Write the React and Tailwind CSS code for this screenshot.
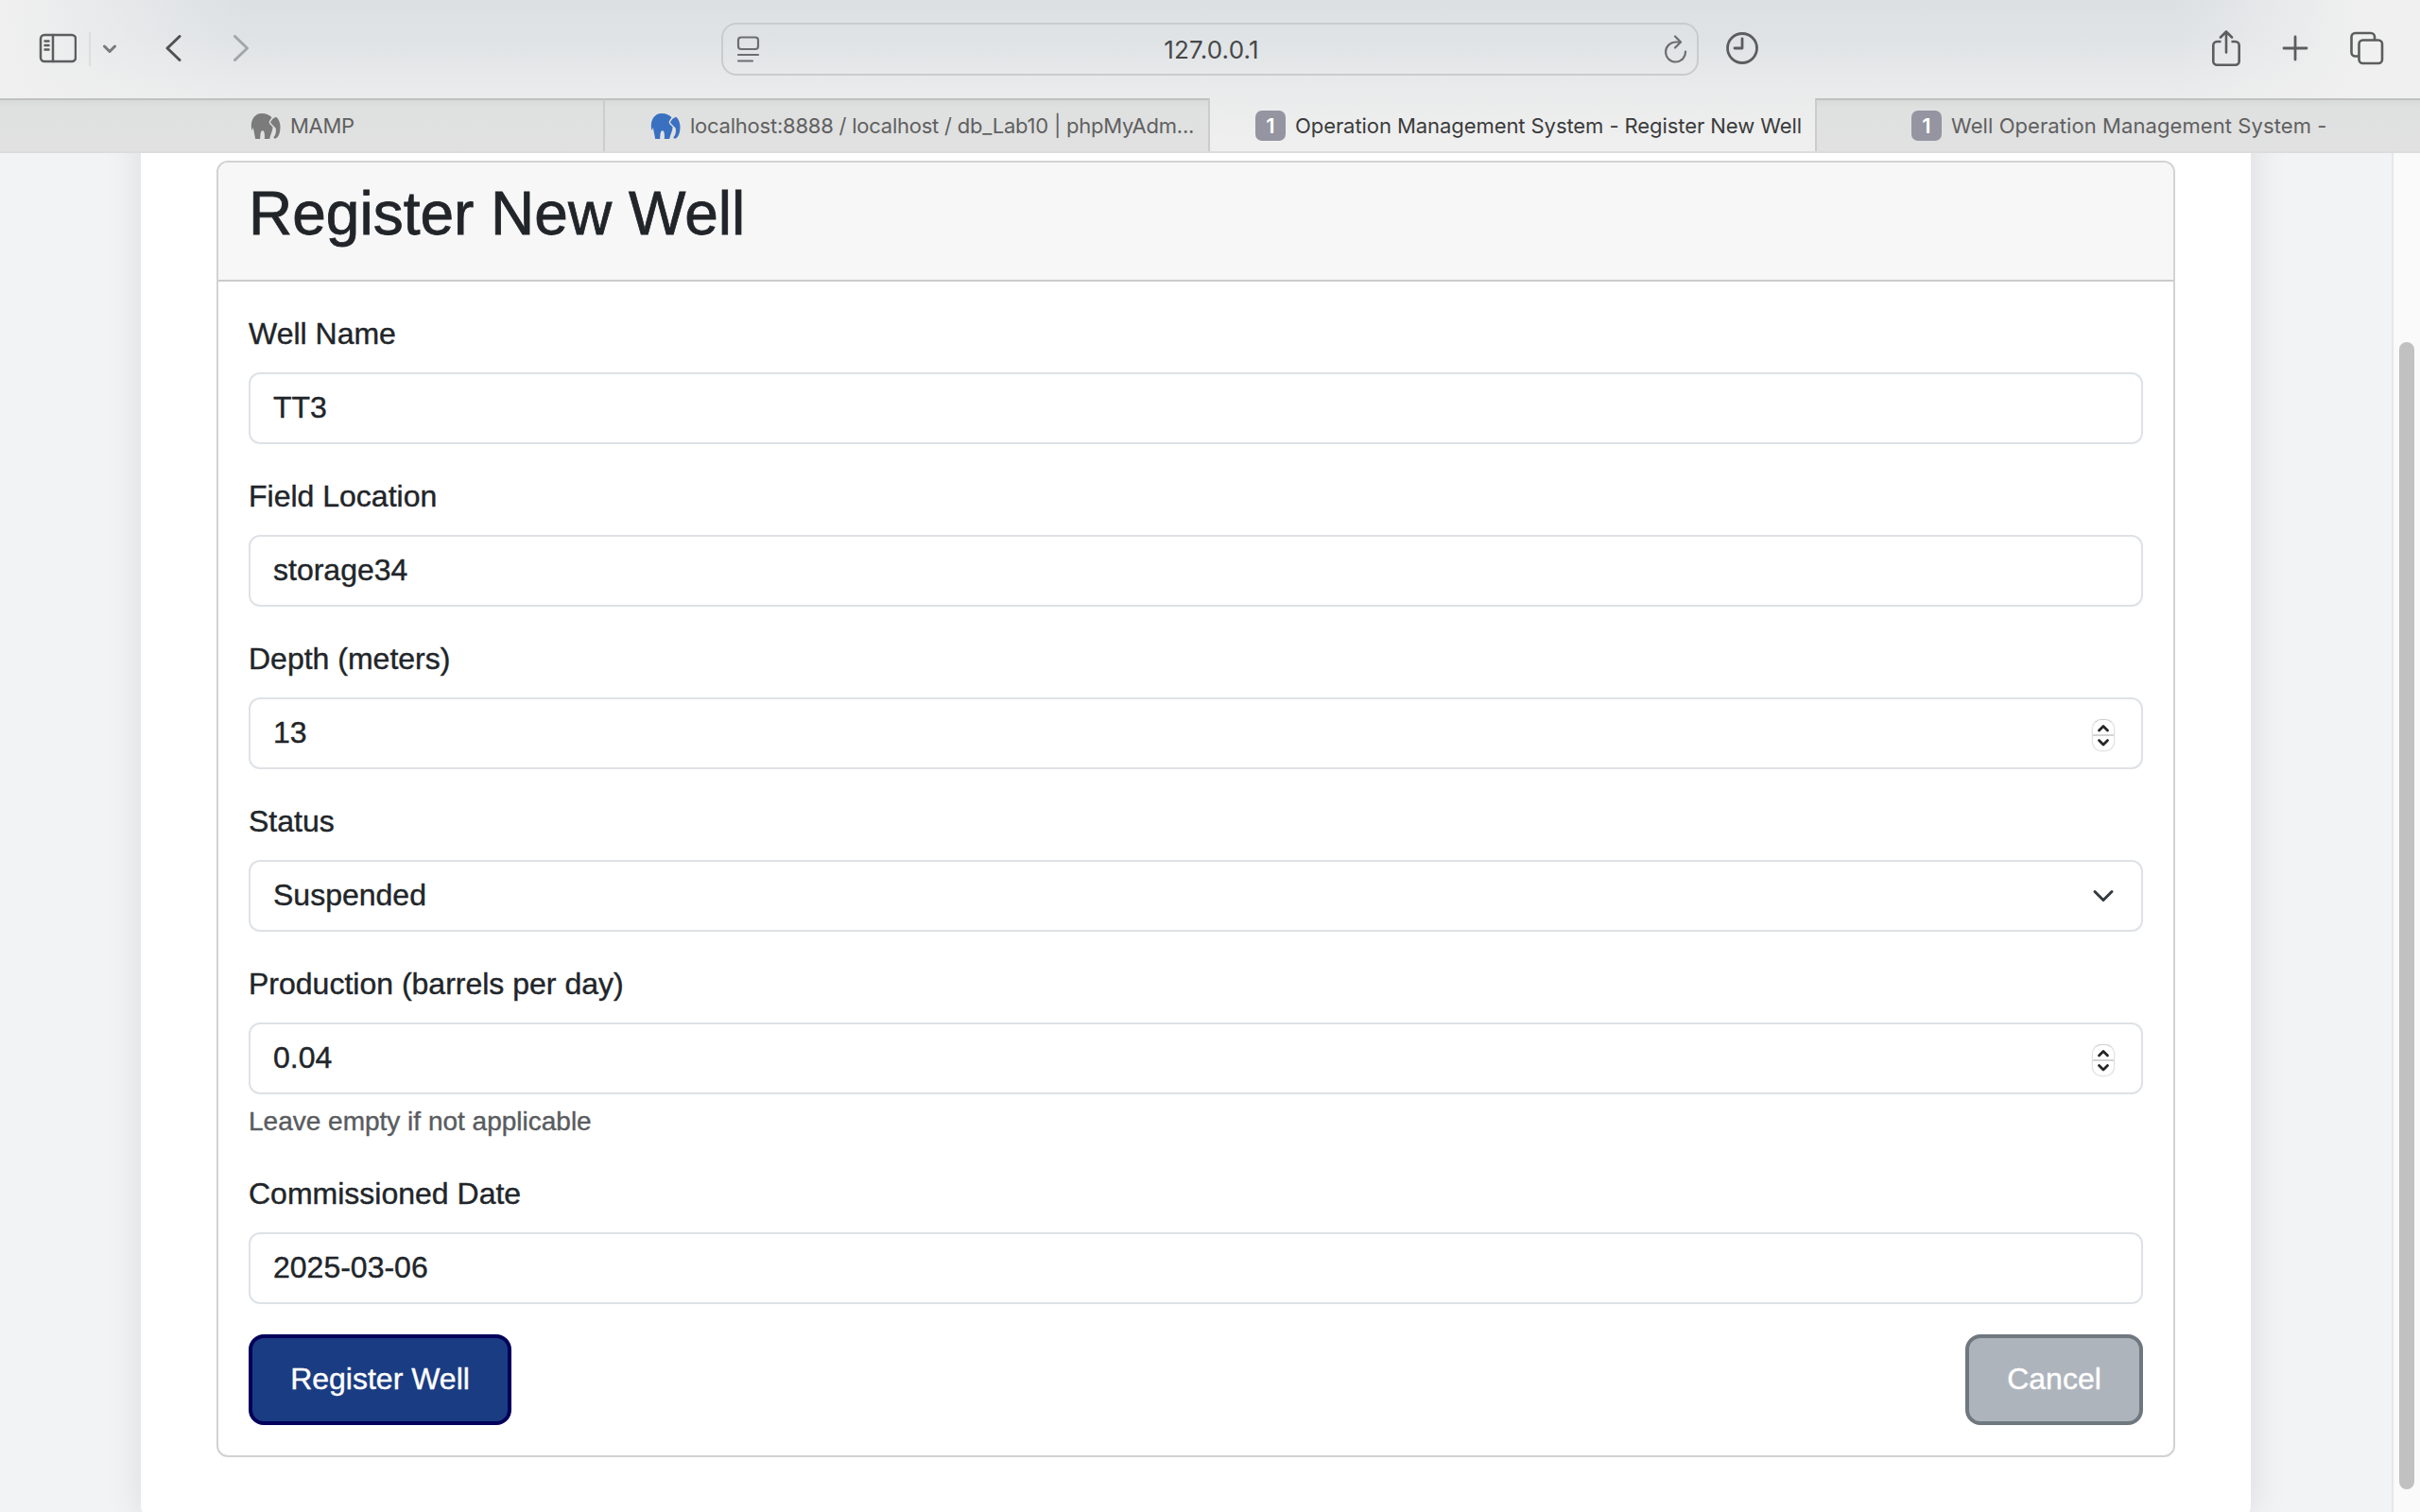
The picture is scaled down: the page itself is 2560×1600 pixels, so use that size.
const Elephant = ({ className }) => (
  <svg className={className} width="32" height="27" viewBox="0 0 95 81" fill="currentColor">
    <path d="M35 0C50 0 60 5 67 13L62 20C57 26 58 31 62 35L70 43C71 54 62 68 60 81H44C45 68 44 55 38 55C31 55 31 68 30 81H15L8 45L4 55C-3 30 8 0 35 0Z" />
    <path d="M70 17L80 11C85 13 94 25 94 42C94 62 88 77 78 80C74 80 73 78 73 75C80 70 81 58 80 48C77 42 74 42 71 38L64 31C62 28 63 26 65 24Z" />
  </svg>
);

const Badge = () => (
  <span className="flex h-8 w-8 shrink-0 items-center justify-center rounded-[7px] bg-[#9594a1] text-[22px] font-semibold text-white">1</span>
);

const Label = ({ children }) => <div className="mb-[17px] h-12 text-[32px] leading-[48px]">{children}</div>;

const Field = ({ label, value, icon, help }) => (
  <div className="mb-[31px]">
    <Label>{label}</Label>
    <div className="flex h-[76px] items-center justify-between rounded-xl border-2 border-[#dee2e6] bg-white pr-[26px] pl-6 text-[32px] leading-[48px]">
      <span className="mb-0.5">{value}</span>
      {icon}
    </div>
    {help && <div className="mt-2 text-[28px] leading-[42px] text-[#595c5f]">{help}</div>}
  </div>
);

const Spinner = () => (
  <span className="mt-1 mr-0.5 flex h-[34px] w-6 flex-col items-center rounded-[10px] border border-[#e2e2e2] border-t-[#cfcfcf] bg-white shadow-[0_0_2px_rgba(0,0,0,0.12)]">
    <svg width="22" height="32" viewBox="0 0 22 32" fill="none">
      <path d="M0 16h22" stroke="#d4d4d4" strokeWidth="2" />
      <path d="M6.500 11 11 6.500 15.500 11M6.500 21.500 11 26l4.500-4.500" stroke="#262626" strokeWidth="2.800" strokeLinecap="round" strokeLinejoin="round" />
    </svg>
  </span>
);

const Chevron = () => (
  <svg className="mr-0.5" width="24" height="24" viewBox="0 0 16 16" fill="none" stroke="#343a40" strokeWidth="2" strokeLinecap="round" strokeLinejoin="round">
    <path d="m2 5 6 6 6-6" />
  </svg>
);

const Tab = ({ className, children }) => (
  <div className={"flex h-14 items-center overflow-hidden whitespace-nowrap text-[22px] " + className}>{children}</div>
);

const inactive = "border-t-2 border-t-[#bfc0c0] bg-linear-to-b from-[#d9dbdb] via-[#dfe0e0] via-15% to-[#e1e1e1] text-[#5f6060]";

export default function App() {
  return (
    <div className="flex h-[1600px] w-[2560px] flex-col overflow-hidden bg-[#f2f3f5] font-['Liberation_Sans',sans-serif] text-[#212529]">
      <header className="h-[162px] shrink-0 border-b-2 border-[#dcdcdc] bg-[linear-gradient(90deg,#f0f0f0_0,#f0f0f000_260px,#f0f0f000_2300px,#f0f0f0_2500px),linear-gradient(180deg,#dce0e3_0,#dfe3e5_40px,#e9eaeb_90px,#efefef_150px)] font-[Inter,sans-serif]">
        <div className="flex h-[104px] items-center text-[#5b5d5e]">
          <svg className="mb-0.5 ml-[41px]" width="40" height="32" viewBox="0 0 40 32" fill="none" stroke="currentColor" strokeWidth="2.500" strokeLinecap="round">
            <rect x="2" y="2" width="37" height="28" rx="4" />
            <path d="M15 2v28M6.500 8.500h4M6.500 13h4M6.500 17.500h4" />
          </svg>
          <span className="ml-[13px] h-9 w-0.5 bg-[#dcdddd]" />
          <svg className="ml-[13px]" width="14" height="12" viewBox="0 0 14 12" fill="none" stroke="#77797a" strokeWidth="3" strokeLinecap="round" strokeLinejoin="round"><path d="m1.500 3 5.500 5.500L12.500 3" /></svg>
          <svg className="mb-0.5 ml-[50px]" width="20" height="28" viewBox="0 0 20 28" fill="none" stroke="#4f5152" strokeWidth="3" strokeLinecap="round" strokeLinejoin="round"><path d="M17 1.500 4 14l13 12.500" /></svg>
          <svg className="mb-0.5 ml-[52px]" width="20" height="28" viewBox="0 0 20 28" fill="none" stroke="#a3a6a8" strokeWidth="3" strokeLinecap="round" strokeLinejoin="round"><path d="m3.500 1.500 13 12.500-13 12.500" /></svg>
          <div className="ml-[498px] flex h-14 w-[1034px] items-center justify-between rounded-2xl border-2 border-[#c9cccd] pr-2.5 pl-3.5">
            <svg width="26" height="28" viewBox="0 0 26 28" fill="none" stroke="#6c6e6f" strokeWidth="2.200" strokeLinecap="round"><rect x="2" y="1.500" width="21" height="12.500" rx="3" /><path d="M2 20h21M2 26.500h15" /></svg>
            <span className="mr-[3px] text-[26px] tracking-[0.2px] text-[#464849]">127.0.0.1</span>
            <svg width="24" height="30" viewBox="0 0 24 30" fill="none" stroke="#6c6e6f" strokeWidth="2.200" strokeLinecap="round" strokeLinejoin="round"><path d="M22 17.500A10.500 10.500 0 1 1 12 7.500h4M11 1.500l6 6-6 6" /></svg>
          </div>
          <svg className="mb-0.5 ml-[28px]" width="36" height="36" viewBox="0 0 36 36" fill="none" stroke="currentColor" strokeWidth="2.800" strokeLinecap="round" strokeLinejoin="round"><circle cx="18" cy="18" r="15.500" /><path d="M18 8v10H10" /></svg>
          <svg className="mb-0.5 ml-[479px]" width="30" height="38" viewBox="0 0 30 38" fill="none" stroke="currentColor" strokeWidth="2.600" strokeLinecap="round" strokeLinejoin="round"><path d="M9.500 12H5.300a4 4 0 0 0-4 4v16.700a4 4 0 0 0 4 4h19.400a4 4 0 0 0 4-4V16a4 4 0 0 0-4-4h-4.200" strokeLinecap="butt" /><path d="M15 23.500V1.800M9 7.500l6-6 6 6" /></svg>
          <svg className="mb-0.5 ml-11" width="28" height="28" viewBox="0 0 28 28" fill="none" stroke="currentColor" strokeWidth="2.800" strokeLinecap="round"><path d="M14 2v24M2 14h24" /></svg>
          <svg className="mb-0.5 ml-11" width="36" height="36" viewBox="0 0 36 36" fill="none" stroke="currentColor" strokeWidth="2.600" strokeLinecap="butt"><rect x="9.500" y="9.500" width="24.500" height="24.500" rx="4" /><path d="M9 26.500H5.500a4 4 0 0 1-4-4V6a4 4 0 0 1 4-4H22a4 4 0 0 1 4 4v3" /></svg>
        </div>
        <div className="flex h-14">
          <Tab className={"w-[640px] border-r-2 border-r-[#cbcccc] pl-[265px] " + inactive}>
            <Elephant className="mr-2.5 text-[#7b7b7b]" /><span className="tracking-[-0.3px]">MAMP</span>
          </Tab>
          <Tab className={"w-[640px] border-r-2 border-r-[#cbcccc] pl-12 " + inactive}>
            <Elephant className="mr-2.5 text-[#3a70c0]" /><span className="tracking-[-0.23px]">localhost:8888 / localhost / db_Lab10 | phpMyAdm...</span>
          </Tab>
          <Tab className="w-[640px] pt-0.5 pl-12 text-[#3a3b3b]">
            <Badge /><span className="ml-2.5 tracking-[-0.07px]">Operation Management System - Register New Well</span>
          </Tab>
          <Tab className={"w-[640px] border-l-2 border-l-[#cbcccc] pl-[100px] " + inactive}>
            <Badge /><span className="ml-2.5 tracking-[0.08px]">Well Operation Management System -</span>
          </Tab>
        </div>
      </header>
      <div className="flex min-h-0 flex-1 overflow-hidden">
        <div className="h-[1444px] w-[2530px] shrink-0 overflow-hidden pl-[149px]">
          <main className="-mt-10 h-[1487px] w-[2232px] rounded-2xl bg-white px-20 pt-12 shadow-[0_0_40px_rgba(0,0,0,0.1)] [-webkit-text-stroke:0.4px]">
            <section className="h-[1372px] rounded-xl border-2 border-[#d2d2d2]">
              <div className="h-[126px] rounded-t-[10px] border-b-2 border-[#cbcbcb] bg-[#f7f7f7] px-8 pt-4">
                <h2 className="text-[64px] leading-[76.800px] [-webkit-text-stroke:0.8px]">Register New Well</h2>
              </div>
              <div className="px-8 pt-[31px]">
                <Field label="Well Name" value="TT3" />
                <Field label="Field Location" value="storage34" />
                <Field label="Depth (meters)" value="13" icon={<Spinner />} />
                <Field label="Status" value="Suspended" icon={<Chevron />} />
                <Field label="Production (barrels per day)" value="0.04" icon={<Spinner />} help="Leave empty if not applicable" />
                <Field label="Commissioned Date" value="2025-03-06" />
                <div className="mt-8 flex justify-between">
                  <button className="h-24 w-[278px] rounded-2xl border-4 border-[#02005a] bg-[#1a3c82] pb-0.5 text-[32px] text-white">Register Well</button>
                  <button className="h-24 w-[188px] rounded-2xl border-4 border-[#6f777f] bg-[#aeb4bc] pb-0.5 text-[32px] text-white">Cancel</button>
                </div>
              </div>
            </section>
          </main>
        </div>
        <div className="flex w-[30px] justify-center border-l-2 border-[#e6e7e8] bg-[#fafafa] pt-[200px]">
          <div className="h-[1214px] w-4 rounded-full bg-[#c1c1c1]" />
        </div>
      </div>
    </div>
  );
}
